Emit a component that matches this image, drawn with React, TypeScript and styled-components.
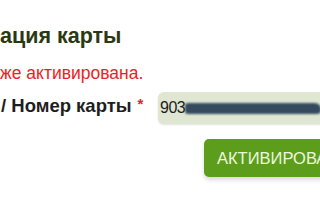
import React from "react";
import styled, { createGlobalStyle } from "styled-components";

const GlobalStyle = createGlobalStyle`
  html, body {
    margin: 0;
    padding: 0;
    background: #ffffff;
    overflow: hidden;
  }
  body {
    font-family: "Liberation Sans", Arial, sans-serif;
  }
`;

const Page = styled.div`
  width: 320px;
  height: 200px;
  overflow: hidden;
  padding-top: 23px;
  box-sizing: border-box;
`;

const Title = styled.h2`
  margin: 0;
  font-size: 21.5px;
  line-height: 26px;
  font-weight: 700;
  color: #2b3913;
  white-space: nowrap;
`;

const Notice = styled.p`
  margin: 14px 0 0;
  font-size: 17.5px;
  line-height: 20px;
  color: #ee1c25;
  white-space: nowrap;
`;

const FieldRow = styled.div`
  display: grid;
  grid-template-columns: 158px 200px;
  margin-top: 9px;
`;

const Label = styled.label`
  align-self: start;
  margin-top: 2px;
  font-size: 18.5px;
  line-height: 20px;
  font-weight: 700;
  color: #1e1e1e;
  white-space: nowrap;
  padding-left: 1px;
`;

const Required = styled.span`
  color: #e8202a;
  font-size: 15px;
  margin-left: 6px;
  vertical-align: 3px;
`;

const Input = styled.div`
  height: 32px;
  background: #dfe6d2;
  border-radius: 6px 0 0 6px;
  display: flex;
  align-items: center;
  padding-left: 2px;
  font-size: 16px;
  letter-spacing: -0.5px;
  color: #1c1c1c;
  box-shadow: 0 1px 2px rgba(0, 0, 0, 0.12);
`;

const Redacted = styled.span`
  display: inline-block;
  width: 136px;
  height: 11px;
  margin-top: 1px;
  background: #364a5e;
  border-radius: 3px 6px 4px 3px;
  filter: blur(0.8px);
`;

const Actions = styled.div`
  display: flex;
  margin-top: 15px;
  padding-left: 204px;
`;

const Button = styled.button`
  flex: none;
  height: 38px;
  padding: 0 13px;
  border: none;
  border-radius: 5px;
  background: #5c9e1b;
  color: #eef6df;
  font-family: "Liberation Sans", Arial, sans-serif;
  font-size: 16.5px;
  white-space: nowrap;
  box-shadow: 0 3px 4px rgba(0, 0, 0, 0.15);
`;

export default function App() {
  return (
    <>
      <GlobalStyle />
      <Page>
        <Title>ация карты</Title>
        <Notice>же активирована.</Notice>
        <FieldRow>
          <Label>
            / Номер карты<Required>*</Required>
          </Label>
          <Input>
            903<Redacted />
          </Input>
        </FieldRow>
        <Actions>
          <Button>АКТИВИРОВАТЬ</Button>
        </Actions>
      </Page>
    </>
  );
}
